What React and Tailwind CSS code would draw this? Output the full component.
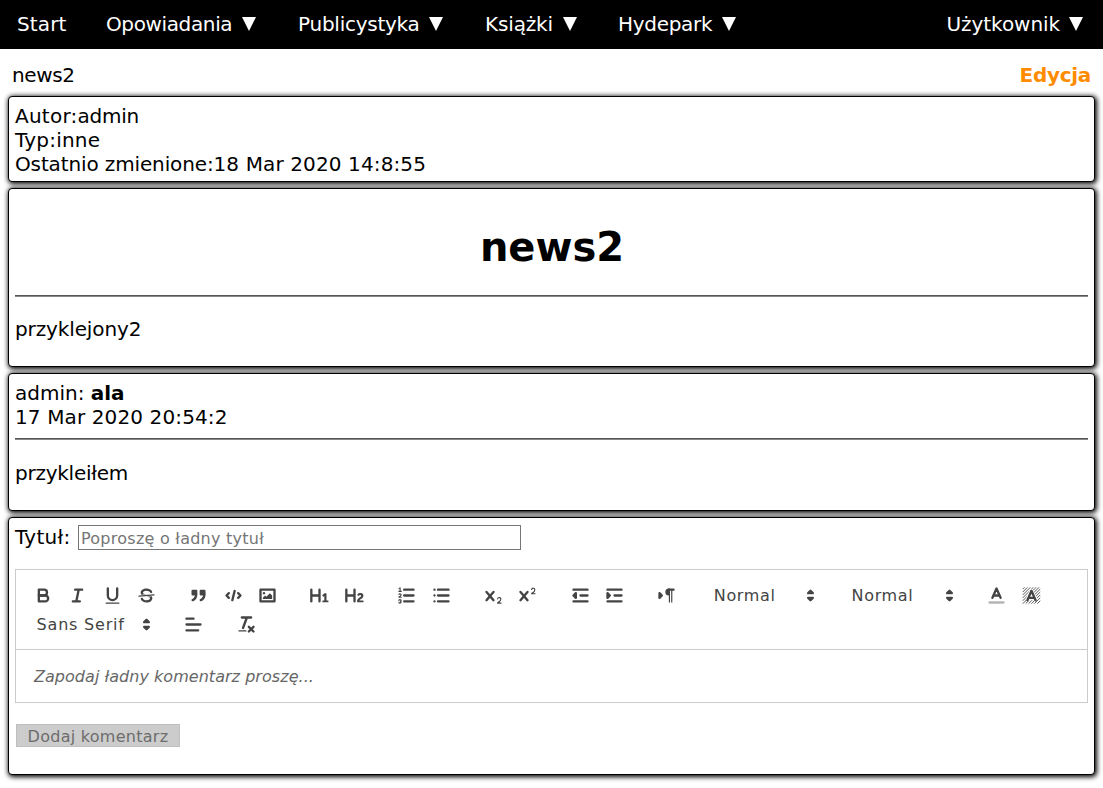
const S = { fill: 'none', stroke: '#444', strokeWidth: 2, strokeLinecap: 'round', strokeLinejoin: 'round' };
const T = { ...S, strokeWidth: 1 };
const F = { fill: '#444' };
const FS = { ...S, fill: '#444' };
const X = 'M9.65,5.241a1,1,0,0,0-1.409.108L6,7.964,3.759,5.349A1,1,0,0,0,2.192,6.59178Q2.21541,6.6213,2.241,6.649L4.684,9.5,2.241,12.35A1,1,0,0,0,3.71,13.70722q0.02557-.02768.049-0.05722L6,11.036,8.241,13.65a1,1,0,1,0,1.567-1.24277Q9.78459,12.3777,9.759,12.35L7.316,9.5,9.759,6.651A1,1,0,0,0,9.65,5.241Z';

const icons = {
  bold: <g {...S}><path d="M5,4H9.5A2.5,2.5,0,0,1,12,6.5v0A2.5,2.5,0,0,1,9.5,9H5Z" /><path d="M5,9h5.5A2.5,2.5,0,0,1,13,11.5v0A2.5,2.5,0,0,1,10.5,14H5Z" /></g>,
  italic: <g {...S}><path d="M7 4H13M5 14H11M8 14L10 4" /></g>,
  underline: <><path {...S} d="M5,3V9a4.012,4.012,0,0,0,4,4H9a4.012,4.012,0,0,0,4-4V3" /><rect {...F} height="1" rx=".5" width="12" x="3" y="15" /></>,
  strike: <><path {...T} d="M15.5 8.5L2.5 9.5" /><path {...F} d="M9.007,8C6.542,7.791,6,7.519,6,6.5,6,5.792,7.283,5,9,5c1.571,0,2.765.679,2.969,1.309a1,1,0,0,0,1.9-.617C13.356,4.106,11.354,3,9,3,6.2,3,4,4.538,4,6.5a3.2,3.2,0,0,0,.5,1.843Z" /><path {...F} d="M8.984,10C11.457,10.208,12,10.479,12,11.5c0,.708-1.283,1.5-3,1.5-1.571,0-2.765-.679-2.969-1.309a1,1,0,1,0-1.9.617C4.644,13.894,6.646,15,9,15c2.8,0,5-1.538,5-3.5a3.2,3.2,0,0,0-.5-1.843Z" /></>,
  quote: <g {...FS}><rect height="3" width="3" x="4" y="5" /><rect height="3" width="3" x="11" y="5" /><path d="M7,8c0,4.031-3,5-3,5" /><path d="M14,8c0,4.031-3,5-3,5" /></g>,
  code: <g {...S}><path d="M5 7L3 9L5 11M13 7L15 9L13 11M10 5L8 13" /></g>,
  image: <><rect {...S} height="10" width="12" x="3" y="4" /><circle {...F} cx="6" cy="7" r="1" /><polyline {...F} points="5 12 5 11 7 9 8 10 11 7 13 9 13 12 5 12" /></>,
  h1: <path {...F} d="M10,4V14a1,1,0,0,1-2,0V10H3v4a1,1,0,0,1-2,0V4A1,1,0,0,1,3,4V8H8V4a1,1,0,0,1,2,0Zm6.06787,9.209H14.98975V7.59863a.54085.54085,0,0,0-.605-.60547h-.62744a1.01119,1.01119,0,0,0-.748.29688L11.645,8.56641a.5435.5435,0,0,0-.022.8584l.28613.30762a.53861.53861,0,0,0,.84717.0332l.09912-.08789a1.2137,1.2137,0,0,0,.2417-.35254h.02246s-.01123.30859-.01123.60547V13.209H12.041a.54085.54085,0,0,0-.605.60547v.43945a.54085.54085,0,0,0,.605.60547h4.02686a.54085.54085,0,0,0,.605-.60547v-.43945A.54085.54085,0,0,0,16.06787,13.209Z" />,
  h2: <path {...F} d="M16.73975,13.81445v.43945a.54085.54085,0,0,1-.605.60547H11.855a.58392.58392,0,0,1-.64893-.60547V14.0127c0-2.90527,3.39941-3.42187,3.39941-4.55469a.77675.77675,0,0,0-.84717-.78125,1.17684,1.17684,0,0,0-.83594.38477c-.2749.26367-.561.374-.85791.13184l-.4292-.34082c-.30811-.24219-.38525-.51758-.1543-.81445a2.97155,2.97155,0,0,1,2.45361-1.17676,2.45393,2.45393,0,0,1,2.68408,2.40918c0,2.45312-3.1792,2.92676-3.27832,3.93848h2.79443A.54085.54085,0,0,1,16.73975,13.81445ZM9,3A.99974.99974,0,0,0,8,4V8H3V4A1,1,0,0,0,1,4V14a1,1,0,0,0,2,0V10H8v4a1,1,0,0,0,2,0V4A.99974.99974,0,0,0,9,3Z" />,
  ordered: <><path {...S} d="M7 4H15M7 9H15M7 14H15" /><path {...T} d="M2.5 5.5H4.5" /><path {...F} d="M3.5,6A0.5,0.5,0,0,1,3,5.5V3.085l-0.276.138A0.5,0.5,0,0,1,2.053,3c-0.124-.247-0.023-0.324.224-0.447l1-.5A0.5,0.5,0,0,1,4,2.5v3A0.5,0.5,0,0,1,3.5,6Z" /><path {...T} d="M4.5,10.5h-2c0-.234,1.85-1.076,1.85-2.234A0.959,0.959,0,0,0,2.5,8.156" /><path {...T} d="M2.5,14.846a0.959,0.959,0,0,0,1.85-.109A0.7,0.7,0,0,0,3.75,14a0.688,0.688,0,0,0,.6-0.736,0.959,0.959,0,0,0-1.85-.109" /></>,
  bullet: <path {...S} d="M6 4H15M6 9H15M6 14H15M3 4H3M3 9H3M3 14H3" />,
  sub: <><path {...F} d="M15.5,15H13.861a3.858,3.858,0,0,0,1.914-2.975,1.8,1.8,0,0,0-1.6-1.751A1.921,1.921,0,0,0,12.021,11.7a0.50013,0.50013,0,1,0,.957.291h0a0.914,0.914,0,0,1,1.053-.725,0.81,0.81,0,0,1,.744.762c0,1.076-1.16971,1.86982-1.93971,2.43082A1.45639,1.45639,0,0,0,12,15.5a0.5,0.5,0,0,0,.5.5h3A0.5,0.5,0,0,0,15.5,15Z" /><path {...F} d={X} /></>,
  sup: <><path {...F} d="M15.5,7H13.861a4.015,4.015,0,0,0,1.914-2.975,1.8,1.8,0,0,0-1.6-1.751A1.922,1.922,0,0,0,12.021,3.7a0.5,0.5,0,1,0,.957.291,0.917,0.917,0,0,1,1.053-.725,0.81,0.81,0,0,1,.744.762c0,1.077-1.164,1.925-1.934,2.486A1.423,1.423,0,0,0,12,7.5a0.5,0.5,0,0,0,.5.5h3A0.5,0.5,0,0,0,15.5,7Z" /><path {...F} d={X} /></>,
  outdent: <><path {...S} d="M3 14H15M3 4H15M9 9H15" /><polygon {...FS} points="5 7 5 11 3 9" /></>,
  indent: <><path {...S} d="M3 14H15M3 4H15M9 9H15" /><polygon {...FS} points="3 7 3 11 5 9" /></>,
  direction: <><polygon {...FS} points="3 11 5 9 3 7" /><path {...S} d="M15 4H11" /><path {...F} d="M11,3a3,3,0,0,0,0,6h1V3H11Z" /><rect {...F} height="11" width="1" x="11" y="4" /><rect {...F} height="11" width="1" x="13" y="4" /></>,
  color: <><path {...S} opacity=".4" d="M3 15H15" /><path {...S} d="M5.5 11L9 3L12.5 11M11.63 9H6.38" /></>,
  background: <><path stroke="#444" strokeWidth=".75" fill="none" d="M1.5 3.5L3 2M1.5 6L5.5 2M1.5 8.5L8 2M1.5 11L10.5 2M1.5 13.5L13 2M1.5 16L15.5 2M4 16L16.5 3.5M6.5 16L16.5 6M9 16L16.5 8.5M11.5 16L16.5 11M14 16L16.5 13.5" /><path d="M5.5 13L9 5L12.5 13M11.63 11H6.38" fill="#fff" stroke="#fff" strokeWidth="3.4" strokeLinejoin="round" /><path {...S} d="M5.5 13L9 5L12.5 13M11.63 11H6.38" /></>,
  clean: <><path {...S} d="M5 3H13M6 12L9.35 3M11 11L15 15M15 11L11 15" /><rect {...F} height="1" rx=".5" width="7" x="2" y="14" /></>,
  align: <path {...S} d="M3 9H15M3 14H13M3 4H9" />,
  caret: <g {...S}><polygon points="7 11 9 13 11 11" /><polygon points="7 7 9 5 11 7" /></g>,
};

const Icon = ({ name }) => <svg viewBox="0 0 18 18" className="h-[21px] w-[21px] shrink-0">{icons[name]}</svg>;

const Group = ({ names }) => (
  <div className="flex gap-[13.5px]">{names.map((n) => <Icon key={n} name={n} />)}</div>
);

const Picker = ({ label, className }) => (
  <div className={`flex items-center justify-between text-[16px] leading-[21px] text-[#444] ${className}`}>
    <span>{label}</span>
    <Icon name="caret" />
  </div>
);

const Panel = ({ className, children }) => (
  <section className={`rounded-[4px] border border-black bg-white px-[6px] shadow-[1px_1px_5px_1px_#000] ${className}`}>{children}</section>
);

const NavItem = ({ label, className }) => (
  <a className={`flex justify-between ${className}`}><span>{label}</span><svg viewBox="0 0 14 14" className="mt-[5px] h-[14px] w-[14px]"><path fill="#fff" d="M0 0H14L7 14Z" /></svg></a>
);

const Rule = ({ className }) => <hr className={`h-[2px] border-0 border-t border-b border-t-[#555] border-b-[#888] ${className}`} />;

export default function App() {
  return (
    <div className="h-[788px] overflow-hidden bg-white font-['Verdana','DejaVu_Sans',sans-serif] text-[20px] leading-[24px] text-black">
      <nav className="flex h-[49px] bg-black pt-[12px] pl-[17px] pr-[20px] text-white">
        <a className="w-[89px] tracking-[0.15px]">Start</a>
        <NavItem label="Opowiadania" className="mr-[42px] w-[150px] tracking-[-0.37px]" />
        <NavItem label="Publicystyka" className="mr-[42px] w-[145px] tracking-[-0.25px]" />
        <NavItem label="Książki" className="mr-[41px] w-[92px] tracking-[-0.15px]" />
        <NavItem label="Hydepark" className="w-[118px] tracking-[-0.3px]" />
        <NavItem label="Użytkownik" className="ml-auto w-[136.5px] tracking-[-0.05px]" />
      </nav>
      <header className="flex h-[47px] justify-between px-[12px] pt-[14px]">
        <span className="tracking-[-0.4px]">news2</span>
        <a className="font-bold tracking-[-0.3px] text-[#ff8c00]">Edycja</a>
      </header>
      <main className="flex flex-col gap-[6px] px-[8px]">
        <Panel className="h-[86px] pt-[7px]">
          <p><span className="tracking-[0.25px]">Autor:</span><span className="tracking-[-0.25px]">admin</span></p>
          <p className="tracking-[0.2px]">Typ:inne</p>
          <p><span className="tracking-[-0.13px]">Ostatnio zmienione:</span><span className="tracking-[0.12px]">18 Mar 2020 14:8:55</span></p>
        </Panel>
        <Panel className="h-[179px] pt-[34px]">
          <h1 className="pl-px text-center text-[40px] leading-[48px] font-bold">news2</h1>
          <Rule className="mt-[24px]" />
          <p className="mt-[20px] tracking-[-0.12px]">przyklejony2</p>
        </Panel>
        <Panel className="h-[138px] pt-[7px]">
          <p>admin: <b>ala</b></p>
          <p className="tracking-[0.12px]">17 Mar 2020 20:54:2</p>
          <Rule className="mt-[9px]" />
          <p className="mt-[21px] tracking-[-0.25px]">przykleiłem</p>
        </Panel>
        <Panel className="h-[258px] pt-[7px]">
          <div className="flex">
            <label className="w-[63px] tracking-[0.25px]">Tytuł:</label>
            <input placeholder="Poproszę o ładny tytuł" className="h-[25px] w-[443px] border border-[#767676] px-[2px] pt-px text-[16px] tracking-[0.25px] placeholder:text-[#757575]" />
          </div>
          <div className="mt-[19px] border border-[#ccc]">
            <div className="h-[80px] border-b border-[#ccc] pt-[15px] pl-[16.6px]">
              <div className="flex gap-[31.2px]">
                <Group names={['bold', 'italic', 'underline', 'strike']} />
                <Group names={['quote', 'code', 'image']} />
                <Group names={['h1', 'h2']} />
                <Group names={['ordered', 'bullet']} />
                <Group names={['sub', 'sup']} />
                <Group names={['outdent', 'indent']} />
                <Group names={['direction']} />
                <Picker label="Normal" className="ml-[5.4px] w-[107.6px] tracking-[0.65px]" />
                <Picker label="Normal" className="-ml-px w-[108px] tracking-[0.65px]" />
                <div className="-ml-[4.6px]"><Group names={['color', 'background']} /></div>
              </div>
              <div className="mt-[8px] flex">
                <Picker label="Sans Serif" className="ml-[4px] w-[120px] tracking-[0.8px]" />
                <div className="ml-[26.3px] flex gap-[32.4px]"><Icon name="align" /><Icon name="clean" /></div>
              </div>
            </div>
            <div className="h-[52px] pt-[15px] pl-[18px] text-[16px] tracking-[0.04px] italic text-[#666]">Zapodaj ładny komentarz proszę...</div>
          </div>
          <button className="mt-[21px] ml-px flex h-[23px] w-[164px] items-center justify-center border border-[#bfbfbf] bg-[#ccc] pt-[2px] text-[16px] tracking-[0.27px] text-[#6d6d6d]">Dodaj komentarz</button>
        </Panel>
      </main>
    </div>
  );
}
